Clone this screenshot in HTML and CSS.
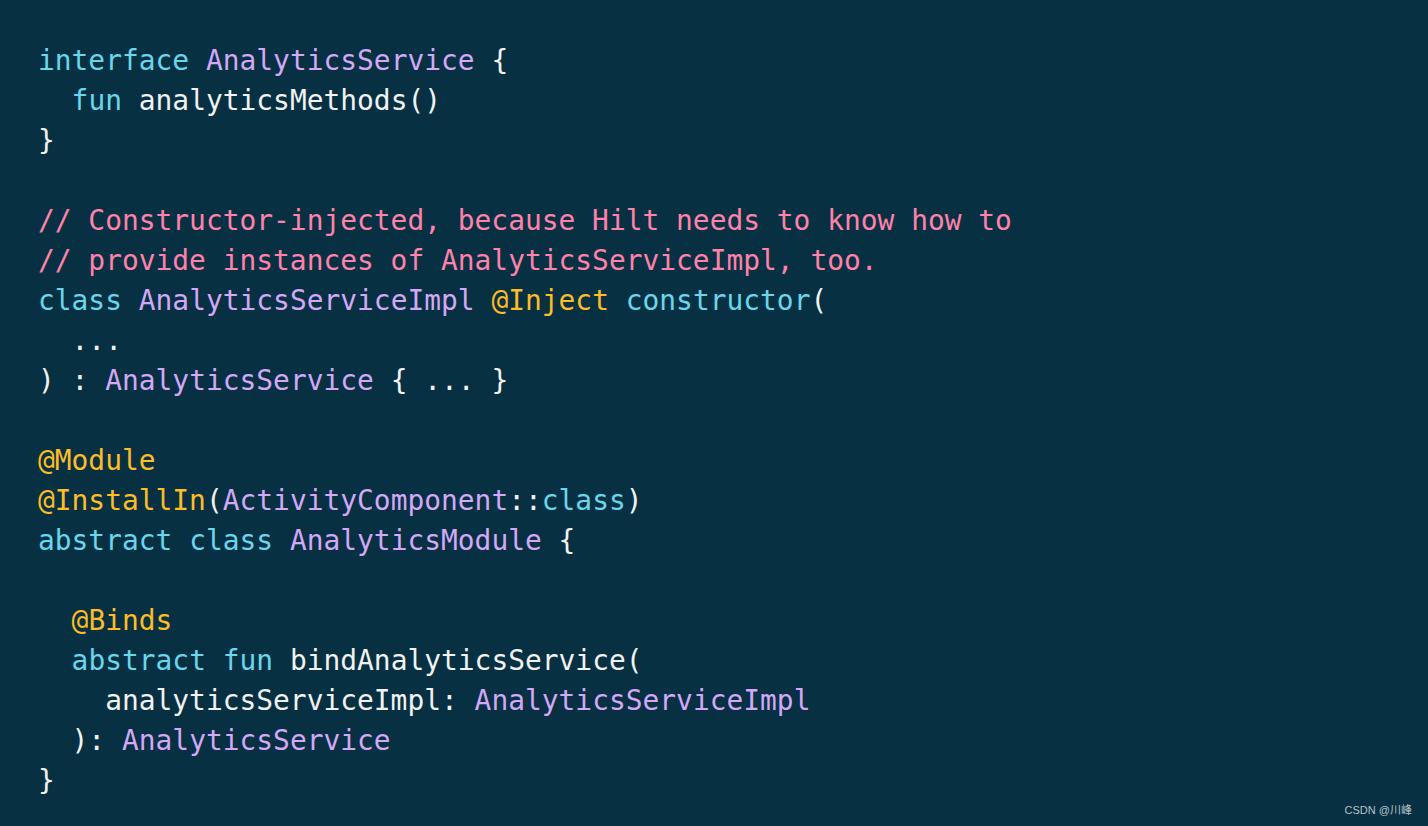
FILE: index.html
```html
<!DOCTYPE html>
<html>
<head>
<meta charset="utf-8">
<link rel="stylesheet" href="styles.css">
</head>
<body>
<main class="page">
<pre class="code"><span class="k">interface</span> <span class="t">AnalyticsService</span> {
  <span class="k">fun</span> analyticsMethods()
}

<span class="c">// Constructor-injected, because Hilt needs to know how to</span>
<span class="c">// provide instances of AnalyticsServiceImpl, too.</span>
<span class="k">class</span> <span class="t">AnalyticsServiceImpl</span> <span class="a">@Inject</span> <span class="k">constructor</span>(
  ...
) : <span class="t">AnalyticsService</span> { ... }

<span class="a">@Module</span>
<span class="a">@InstallIn</span>(<span class="t">ActivityComponent</span>::<span class="k">class</span>)
<span class="k">abstract</span> <span class="k">class</span> <span class="t">AnalyticsModule</span> {

  <span class="a">@Binds</span>
  <span class="k">abstract</span> <span class="k">fun</span> bindAnalyticsService(
    analyticsServiceImpl: <span class="t">AnalyticsServiceImpl</span>
  ): <span class="t">AnalyticsService</span>
}</pre>
<div class="mark">CSDN @川峰</div>
</main>
</body>
</html>
```

FILE: styles.css
```css
html, body {
  margin: 0;
  padding: 0;
  background: #073042;
}
.page {
  position: relative;
  width: 1428px;
  height: 826px;
  background: #073042;
  box-sizing: border-box;
  padding: 41px 0 0 38px;
  overflow: hidden;
}
.code {
  margin: 0;
  font-family: "DejaVu Sans Mono", "Liberation Mono", monospace;
  font-size: 27.9px;
  line-height: 40px;
  color: #f2f2f2;
  white-space: pre;
}
.k { color: #6ad6ec; }
.t { color: #d2a8f7; }
.c { color: #ff82aa; }
.a { color: #fcbd27; }
.mark {
  position: absolute;
  right: 16px;
  bottom: 9px;
  font-family: "Liberation Sans", "Noto Sans CJK SC", sans-serif;
  font-size: 11px;
  color: #b9c3ca;
}
```
